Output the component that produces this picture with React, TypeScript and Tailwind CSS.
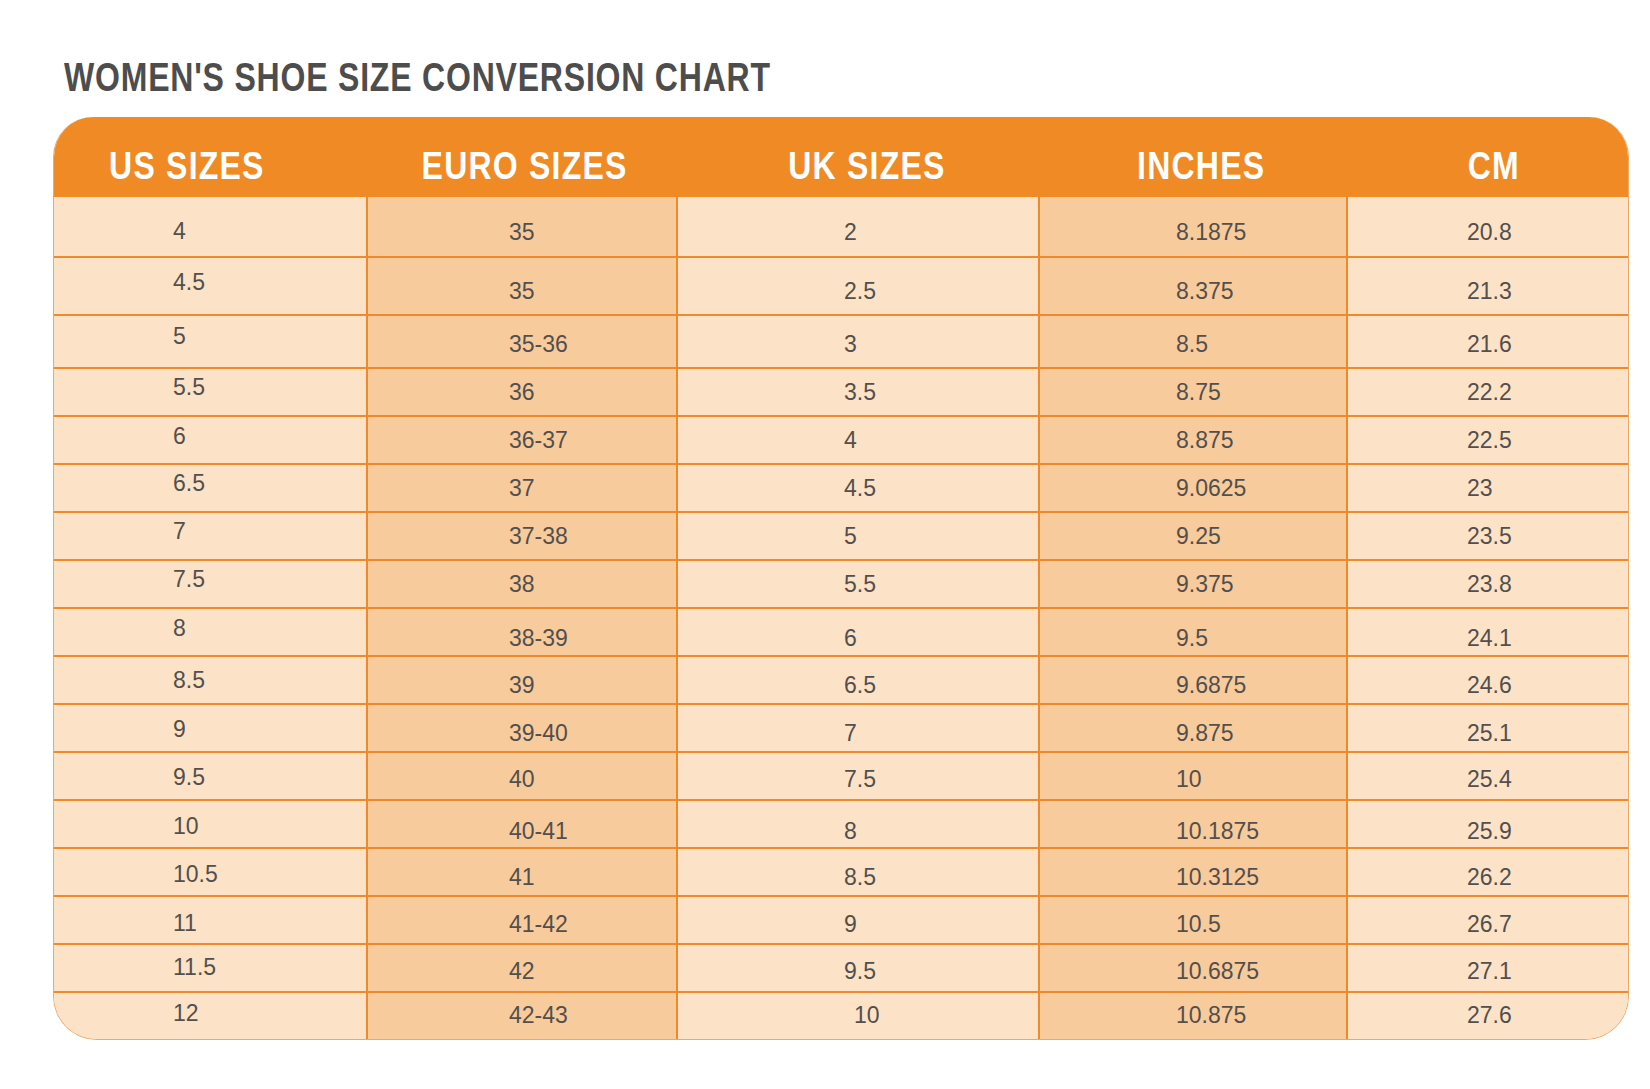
import React from "react";

type Row = { v: string[]; a: string; b: string; extra?: string };

const rows: Row[] = [
  { v: ["4", "35", "2", "8.1875", "20.8"], a: "translate-y-[5px]", b: "translate-y-[6px]" },
  { v: ["4.5", "35", "2.5", "8.375", "21.3"], a: "-translate-y-[4px]", b: "translate-y-[5px]" },
  { v: ["5", "35-36", "3", "8.5", "21.6"], a: "-translate-y-[5px]", b: "translate-y-[3px]" },
  { v: ["5.5", "36", "3.5", "8.75", "22.2"], a: "-translate-y-[5px]", b: "translate-y-[0px]" },
  { v: ["6", "36-37", "4", "8.875", "22.5"], a: "-translate-y-[4px]", b: "translate-y-[0px]" },
  { v: ["6.5", "37", "4.5", "9.0625", "23"], a: "-translate-y-[5px]", b: "translate-y-[0px]" },
  { v: ["7", "37-38", "5", "9.25", "23.5"], a: "-translate-y-[5px]", b: "translate-y-[0px]" },
  { v: ["7.5", "38", "5.5", "9.375", "23.8"], a: "-translate-y-[5px]", b: "translate-y-[0px]" },
  { v: ["8", "38-39", "6", "9.5", "24.1"], a: "-translate-y-[4px]", b: "translate-y-[6px]" },
  { v: ["8.5", "39", "6.5", "9.6875", "24.6"], a: "translate-y-[0px]", b: "translate-y-[5px]" },
  { v: ["9", "39-40", "7", "9.875", "25.1"], a: "translate-y-[1px]", b: "translate-y-[5px]" },
  { v: ["9.5", "40", "7.5", "10", "25.4"], a: "translate-y-[1px]", b: "translate-y-[3px]" },
  { v: ["10", "40-41", "8", "10.1875", "25.9"], a: "translate-y-[2px]", b: "translate-y-[7px]" },
  { v: ["10.5", "41", "8.5", "10.3125", "26.2"], a: "translate-y-[2px]", b: "translate-y-[5px]" },
  { v: ["11", "41-42", "9", "10.5", "26.7"], a: "translate-y-[3px]", b: "translate-y-[4px]" },
  { v: ["11.5", "42", "9.5", "10.6875", "27.1"], a: "-translate-y-[1px]", b: "translate-y-[3px]" },
  { v: ["12", "42-43", "10", "10.875", "27.6"], a: "-translate-y-[3px]", b: "-translate-y-[1px]", extra: "pl-[176px]" },
];

const rowHeights = ["h-[59px]", "h-[58px]", "h-[53px]"];

const cellPad = ["pl-[119px]", "pl-[141px]", "pl-[166px]", "pl-[136px]", "pl-[119px]"];
const cellBg = ["bg-[#FCE3C8]", "bg-[#F8CB9C]", "bg-[#FCE3C8]", "bg-[#F8CB9C]", "bg-[#FCE3C8]"];

const headers: { t: string; c: string }[] = [
  { t: "US SIZES", c: "pr-[46px]" },
  { t: "EURO SIZES", c: "pl-[8px]" },
  { t: "UK SIZES", c: "pl-[20px]" },
  { t: "INCHES", c: "pl-[18px]" },
  { t: "CM", c: "pl-[12px]" },
];

const sans = "font-['Liberation_Sans',Arial,sans-serif]";

export default function App() {
  return (
    <div className="min-h-[1089px] w-[1650px] bg-white">
      <div className="pl-[53px] pt-[57px]">
        <h1 className={`${sans} pl-[11px] text-[40px] font-bold leading-[40px] text-[#4D4D4D] whitespace-nowrap`}>
          <span className="inline-block origin-left scale-x-[0.80] tracking-[1px]">WOMEN'S SHOE SIZE CONVERSION CHART</span>
        </h1>
        <div className="mt-[20px] w-[1576px] overflow-hidden rounded-t-[40px] rounded-b-[44px] border-x border-b border-[#EDA868]">
          <div className="grid h-[80px] grid-cols-[312px_310px_362px_308px_284px] bg-[#F08A24]">
            {headers.map((h) => (
              <div
                key={h.t}
                className={`${sans} ${h.c} flex justify-center pt-[29px] text-[39px] font-bold leading-[40px] text-white whitespace-nowrap`}
              >
                <span className="inline-block origin-center scale-x-[0.82] tracking-[1.5px]">{h.t}</span>
              </div>
            ))}
          </div>
          {rows.map((r, i) => (
            <div
              key={i}
              className={`grid grid-cols-[312px_310px_362px_308px_284px] ${
                i === 0 ? "" : "border-t-2 border-[#EE8A2C]"
              } ${rowHeights[i] ?? "h-[48px]"}`}
            >
              {r.v.map((val, j) => (
                <div
                  key={j}
                  className={`flex items-center ${cellBg[j]} ${
                    j === 2 && r.extra ? r.extra : cellPad[j]
                  } ${j > 0 ? "border-l-2 border-[#EE8A2C]" : ""}`}
                >
                  <span className={`${j === 0 ? r.a : r.b} ${sans} text-[23px] leading-[23px] text-[#524F4D]`}>
                    {val}
                  </span>
                </div>
              ))}
            </div>
          ))}
        </div>
      </div>
    </div>
  );
}
